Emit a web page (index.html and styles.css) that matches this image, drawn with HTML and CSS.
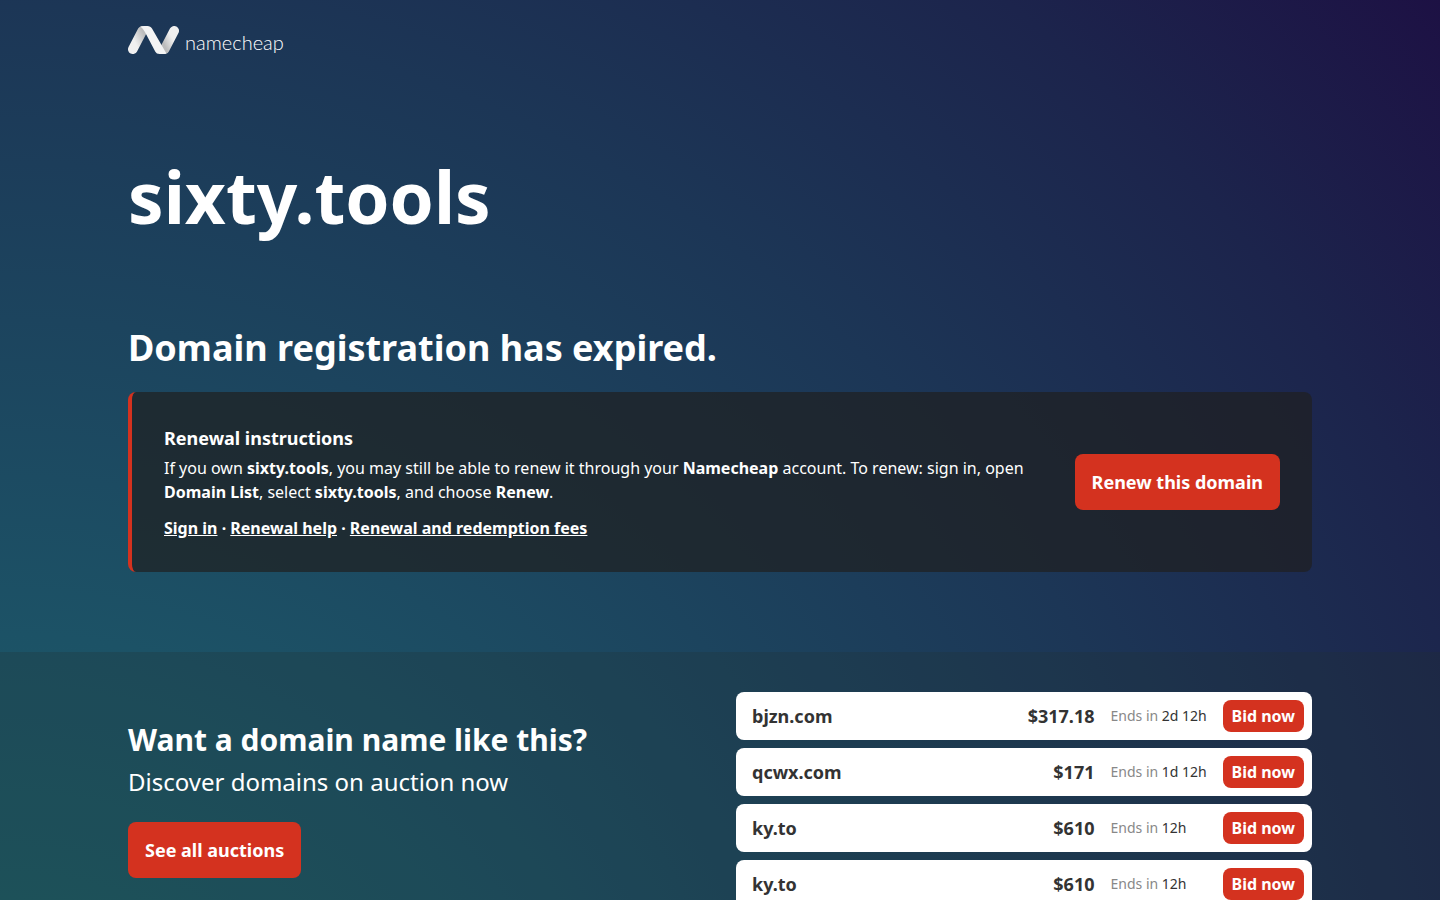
FILE: index.html
```html
<!DOCTYPE html>
<html lang="en">
<head>
<meta charset="utf-8">
<meta name="viewport" content="width=device-width, initial-scale=1">
<title>sixty.tools - Registered at Namecheap.com</title>
<link rel="stylesheet" href="styles.css">
</head>
<body>
<div class="page">
  <header class="header wrap">
    <a class="logo" href="#" aria-label="namecheap">
      <svg class="logo-mark" viewBox="0 0 51 28" aria-hidden="true">
        <defs>
          <linearGradient id="fold-left" x1="0" y1="1" x2="1" y2="0">
            <stop offset="0.3" stop-color="#f0f0f0"/>
            <stop offset="1" stop-color="#bcbcbc"/>
          </linearGradient>
          <linearGradient id="fold-right" x1="0" y1="1" x2="1" y2="0">
            <stop offset="0.1" stop-color="#bcbcbc"/>
            <stop offset="0.7" stop-color="#f0f0f0"/>
          </linearGradient>
        </defs>
        <path d="M4.8 23.2L14.4 4.8" stroke="url(#fold-left)" stroke-width="9.6" stroke-linecap="round"/>
        <path d="M36.6 23.2L46.2 4.8" stroke="url(#fold-right)" stroke-width="9.6" stroke-linecap="round"/>
        <path d="M12.4 0.7C13.6 0.2 14.8 0 16 0H19.5C21.5 0 23.1 0.9 24 2.6L38.4 27.4C37.3 27.8 36 28 34.8 28H31.5C29.6 28 28.1 27.2 27.2 25.5L16.8 5.8C15.8 3.8 14.4 1.9 12.4 0.7Z" fill="#f4f4f4"/>
      </svg>
      <span class="logo-text">namecheap</span>
    </a>
  </header>

  <main>
    <section class="hero wrap">
      <h1 class="domain">sixty.tools</h1>
      <h2 class="status">Domain registration has expired.</h2>
      <div class="notice">
        <div class="notice-body">
          <h3 class="notice-title">Renewal instructions</h3>
          <p class="notice-text">If you own <b>sixty.tools</b>, you may still be able to renew it through your <b>Namecheap</b> account. To renew: sign in, open <b>Domain List</b>, select <b>sixty.tools</b>, and choose <b>Renew</b>.</p>
          <p class="notice-links"><a href="#">Sign in</a> · <a href="#">Renewal help</a> · <a href="#">Renewal and redemption fees</a></p>
        </div>
        <a class="button" href="#">Renew this domain</a>
      </div>
    </section>

    <section class="auctions">
      <div class="auctions-inner wrap">
        <div class="promo">
          <h2 class="promo-title">Want a domain name like this?</h2>
          <p class="promo-text">Discover domains on auction now</p>
          <a class="button" href="#">See all auctions</a>
        </div>
        <ul class="list">
          <li class="item"><span class="name">bjzn.com</span><span class="price">$317.18</span><span class="ends">Ends in <span class="time">2d 12h</span></span><a class="bid" href="#">Bid now</a></li>
          <li class="item"><span class="name">qcwx.com</span><span class="price">$171</span><span class="ends">Ends in <span class="time">1d 12h</span></span><a class="bid" href="#">Bid now</a></li>
          <li class="item"><span class="name">ky.to</span><span class="price">$610</span><span class="ends">Ends in <span class="time">12h</span></span><a class="bid" href="#">Bid now</a></li>
          <li class="item"><span class="name">ky.to</span><span class="price">$610</span><span class="ends">Ends in <span class="time">12h</span></span><a class="bid" href="#">Bid now</a></li>
        </ul>
      </div>
    </section>
  </main>
</div>
</body>
</html>
```
FILE: styles.css
```css
* {
  box-sizing: border-box;
}

body {
  margin: 0;
  overflow: hidden;
  color: #fff;
  font-family: "Noto Sans", sans-serif;
  font-size: 16px;
  line-height: 24px;
}

h1, h2, h3, p, ul {
  margin: 0;
  padding: 0;
}

.page {
  height: 100vh;
  overflow: hidden;
  background: radial-gradient(circle farthest-corner at 0 138%, #1d6468 0%, #1d5c67 18%, #1c5266 32%, #1c3656 65%, #1c244c 84%, #1d1144 100%);
}

.wrap {
  width: 100%;
  max-width: 1248px;
  margin: 0 auto;
  padding: 0 32px;
}

.header {
  padding-top: 24px;
}

.logo {
  display: inline-flex;
  align-items: flex-start;
  gap: 6px;
  color: #fff;
  text-decoration: none;
}

.logo-mark {
  width: 51px;
  height: 28px;
  margin-top: 2px;
  fill: none;
}

.logo-text {
  font-family: Lato, sans-serif;
  font-size: 20px;
  font-weight: 300;
  line-height: 36px;
}

.hero {
  padding-top: 88px;
  padding-bottom: 80px;
}

.domain {
  font-size: 71px;
  font-weight: 700;
  line-height: 98px;
}

.status {
  margin-top: 74px;
  font-size: 36px;
  font-weight: 700;
  line-height: 56px;
}

.notice {
  display: flex;
  align-items: center;
  justify-content: space-between;
  gap: 32px;
  margin-top: 16px;
  padding: 32px;
  border-left: 4px solid #d4321f;
  border-radius: 8px;
  background: rgba(32, 32, 32, 0.7);
}

.notice-title {
  font-size: 18px;
  font-weight: 700;
  line-height: 28px;
}

.notice-text {
  margin-top: 4px;
}

.notice-links {
  margin-top: 12px;
  font-weight: 700;
}

.notice-links a {
  color: #fff;
}

b {
  font-weight: 700;
}

.button {
  display: inline-block;
  flex: none;
  padding: 14px 17px;
  border-radius: 8px;
  background: #d4321f;
  color: #fff;
  font-size: 18px;
  font-weight: 700;
  line-height: 28px;
  text-decoration: none;
}

.auctions {
  padding: 40px 0 0;
  background: rgba(32, 48, 48, 0.25);
}

.auctions-inner {
  display: grid;
  grid-template-columns: 1fr 1fr;
  gap: 32px;
}

.promo {
  padding-top: 28px;
}

.promo-title {
  font-size: 30px;
  font-weight: 700;
  line-height: 40px;
}

.promo-text {
  margin: 4px 0 22px;
  font-size: 24px;
  line-height: 36px;
}

.list {
  display: grid;
  gap: 8px;
  list-style: none;
}

.item {
  display: flex;
  align-items: center;
  gap: 16px;
  padding: 8px 8px 8px 16px;
  border-radius: 8px;
  background: #fff;
  color: #333;
  font-size: 18px;
  font-weight: 700;
}

.name {
  flex: 1;
}

.ends {
  width: 96px;
  color: #888;
  font-size: 14px;
  font-weight: 400;
  white-space: nowrap;
}

.time {
  color: #333;
}

.bid {
  padding: 4px 9px;
  border-radius: 8px;
  background: #d4321f;
  color: #fff;
  font-size: 16px;
  line-height: 24px;
  text-decoration: none;
}
```
